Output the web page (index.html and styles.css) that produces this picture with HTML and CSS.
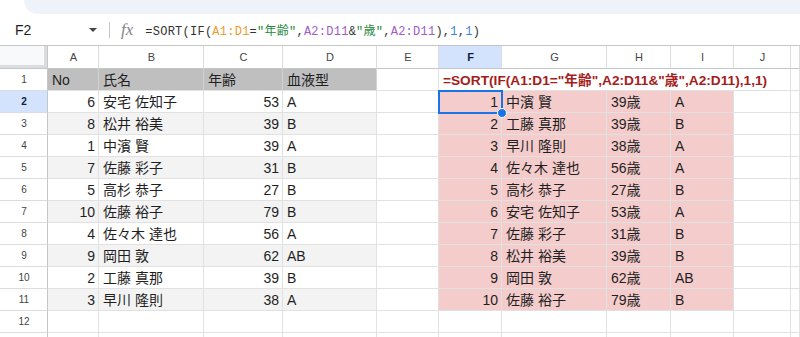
FILE: index.html
```html
<!DOCTYPE html>
<html lang="ja">
  <head>
    <meta charset="UTF-8" />
    <meta name="viewport" content="width=device-width, initial-scale=1.0" />
    <title>SORT</title>
    <link rel="stylesheet" href="styles.css">
  </head>
  <body>
    <div class="topbar"><div class="topbar-fill"></div></div>

    <div class="formula-bar">
      <div class="name-box">
        <span>F2</span>
        <span class="caret"></span>
      </div>
      <div class="divider"></div>
      <span class="fx">fx</span>
      <div class="formula">=SORT(IF(<span class="ref1">A1:D1</span>=<span class="str">"年齢"</span>,<span class="ref2">A2:D11</span>&amp;<span class="str">"歳"</span>,<span class="ref2">A2:D11</span>),<span class="n">1</span>,<span class="n">1</span>)</div>
    </div>

    <div class="sheet" id="sheet"></div>

    <script>
      const letters = ["A", "B", "C", "D", "E", "F", "G", "H", "I", "J", "K"];
      const people = [
        [6, "安宅 佐知子", 53, "A"],
        [8, "松井 裕美", 39, "B"],
        [1, "中濱 賢", 39, "A"],
        [7, "佐藤 彩子", 31, "B"],
        [5, "高杉 恭子", 27, "B"],
        [10, "佐藤 裕子", 79, "B"],
        [4, "佐々木 達也", 56, "A"],
        [9, "岡田 敦", 62, "AB"],
        [2, "工藤 真那", 39, "B"],
        [3, "早川 隆則", 38, "A"],
      ];
      const sorted = people.slice().sort((a, b) => a[0] - b[0]);
      const sheet = document.getElementById("sheet");

      function cell(cls, text) {
        const div = document.createElement("div");
        div.className = "c " + cls;
        if (text !== undefined) div.textContent = text;
        sheet.appendChild(div);
        return div;
      }

      // column headers
      cell("corner");
      letters.forEach((l) => cell("ch" + (l === "F" ? " active" : ""), l === "K" ? "" : l));

      // row 1
      cell("rh", 1);
      ["No", "氏名", "年齢", "血液型"].forEach((t) => cell("title", t));
      cell("");
      cell("overflow", '=SORT(IF(A1:D1="年齢",A2:D11&"歳",A2:D11),1,1)');
      cell("");

      // data rows
      for (let i = 0; i < 10; i++) {
        const r = i + 2;
        const band = r % 2 ? " band" : "";
        const p = people[i];
        const s = sorted[i];
        cell("rh" + (r === 2 ? " active" : ""), r);
        cell("num" + band, p[0]);
        cell(band.trim(), p[1]);
        cell("num" + band, p[2]);
        cell(band.trim(), p[3]);
        cell("");
        const f = cell("num pink", s[0]);
        if (r === 2) {
          const sel = document.createElement("div");
          sel.className = "sel";
          sel.innerHTML = '<span class="handle"></span>';
          f.classList.add("selected");
          f.appendChild(sel);
        }
        cell("pink", s[1]);
        cell("pink", s[2] + "歳");
        cell("pink", s[3]);
        cell("");
        cell("");
      }

      // empty rows (13 is only a sliver at the bottom edge)
      cell("rh", 12);
      letters.forEach(() => cell(""));
      cell("rh");
      letters.forEach(() => cell(""));
    </script>
  </body>
</html>
```

FILE: styles.css
```css
body {
  margin: 0;
  width: 800px;
  height: 337px;
  overflow: hidden;
  background: #fff;
  font-family: "Liberation Sans", Arial, "Noto Sans CJK JP", sans-serif;
  color: #1f1f1f;
}
.topbar {
  height: 14px;
  padding-left: 24px;
  background: #fff;
}
.topbar-fill {
  height: 100%;
  background: #eef2f9;
  border-bottom-left-radius: 14px;
}
.formula-bar {
  display: flex;
  align-items: center;
  height: 31px;
  border-bottom: 1px solid #c4c7c5;
}
.name-box {
  width: 100px;
  box-sizing: border-box;
  padding: 0 3px 0 15px;
  display: flex;
  align-items: center;
  justify-content: space-between;
  font-size: 14px;
}
.caret {
  width: 0;
  height: 0;
  border-left: 4px solid transparent;
  border-right: 4px solid transparent;
  border-top: 4px solid #444;
}
.divider {
  width: 1px;
  height: 16px;
  margin-left: 9px;
  background: #c4c7c5;
}
.fx {
  margin-left: 11px;
  font: italic 17px "Liberation Serif", serif;
  color: #80868b;
}
.formula {
  margin-left: 12px;
  font-family: "Liberation Mono", "Noto Sans CJK JP", monospace;
  font-size: 12px;
  letter-spacing: 0.25px;
  color: #333;
  white-space: nowrap;
}
.ref1 {
  color: #ee9b2c;
}
.ref2 {
  color: #a15cc6;
}
.str {
  color: #2b8a3e;
}
.n {
  color: #3b82e4;
}

.sheet {
  display: grid;
  grid-template-columns: 48px 51px 105px 79px 94px 62px 63px 105px 64px 63px 57px 1fr;
  grid-template-rows: 23px repeat(13, 22px);
}
.c {
  box-sizing: border-box;
  border-right: 1px solid #e1e1e1;
  border-bottom: 1px solid #e1e1e1;
  padding: 0 3px 0 4px;
  display: flex;
  align-items: flex-end;
  font-size: 14px;
  line-height: 19px;
  white-space: nowrap;
  overflow: hidden;
  color: #1f1f1f;
}
.num {
  justify-content: flex-end;
}
.corner {
  background: #f8f9fa;
  box-shadow: inset -3px -3px 0 #dadce0;
  border-right-color: #c4c7c5;
  border-bottom-color: #c4c7c5;
}
.ch {
  justify-content: center;
  align-items: center;
  font-size: 11px;
  color: #444;
  border-right-color: #dadce0;
  border-bottom-color: #c4c7c5;
}
.rh {
  justify-content: center;
  align-items: center;
  font-size: 10px;
  color: #444;
  border-right-color: #c4c7c5;
  border-bottom-color: #dadce0;
}
.active {
  background: #d3e3fd;
  color: #0b1f44;
  font-weight: bold;
}
.title {
  background: #bfbfbf;
  border-right-color: #d2d2d2;
}
.band {
  background: #f3f3f3;
}
.pink {
  background: #f4cccc;
}
.overflow {
  grid-column: span 5;
  font-weight: bold;
  font-size: 13.7px;
  color: #a61c1c;
}
.selected {
  position: relative;
  overflow: visible;
}
.sel {
  position: absolute;
  top: -1px;
  left: -1px;
  right: -2px;
  bottom: -2px;
  border: 2px solid #1a73e8;
}
.handle {
  position: absolute;
  right: -6px;
  bottom: -6px;
  width: 8px;
  height: 8px;
  border-radius: 50%;
  background: #1a73e8;
  border: 1px solid #fff;
}
```
